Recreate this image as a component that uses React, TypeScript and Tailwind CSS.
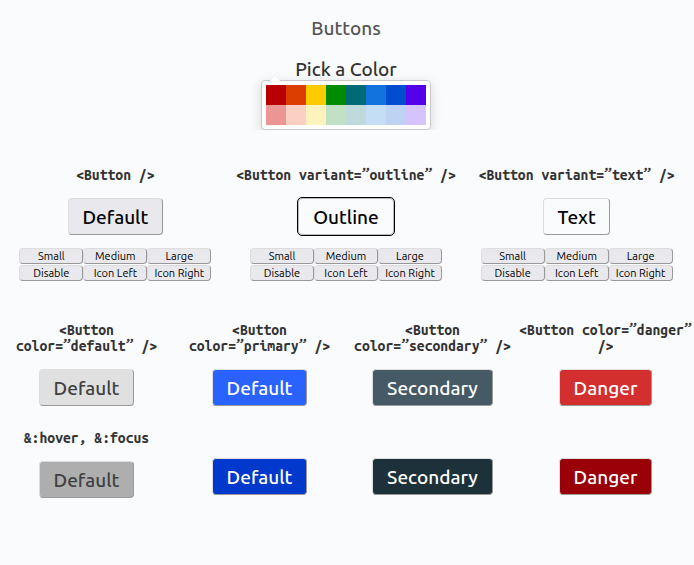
import clsx from "clsx";

const SANS = "font-[Ubuntu,'Noto_Sans',sans-serif]";
const MONO = "font-['Ubuntu_Mono','Liberation_Mono',monospace]";

const SWATCHES = [
  "bg-[#b80000]", "bg-[#db3e00]", "bg-[#fccb00]", "bg-[#008b02]",
  "bg-[#006b76]", "bg-[#1273de]", "bg-[#004dcf]", "bg-[#5300eb]",
  "bg-[#eb9694]", "bg-[#fad0c3]", "bg-[#fef3bd]", "bg-[#c1e1c5]",
  "bg-[#bedadc]", "bg-[#c4def6]", "bg-[#bed3f3]", "bg-[#d4c4fb]",
];

const SIZES = ["Small", "Medium", "Large", "Disable", "Icon Left", "Icon Right"];

const BEVEL = "border border-t-[#dddddd] border-l-[#dddddd] border-r-[#999999] border-b-[#999999]";

const VARIANTS = [
  { code: "<Button />", label: "Default", style: clsx(BEVEL, "w-[95px] bg-[#e9e9ed]") },
  { code: "<Button variant=”outline” />", label: "Outline", style: "w-24 border border-[#bbbbbb] outline outline-black" },
  { code: "<Button variant=”text” />", label: "Text", style: clsx(BEVEL, "w-[67px]") },
];

const COLORS = [
  { code: "<Button color=”default” />", label: "Default", size: "w-[95px]", base: "bg-[#e0e0e0] text-[#3f3f3f]", hover: "bg-[#aeaeae] text-[#3f3f3f]" },
  { code: "<Button color=”primary” />", label: "Default", size: "w-[95px]", base: "bg-[#2962ff] text-white", hover: "bg-[#0039cb] text-white" },
  { code: "<Button color=”secondary” />", label: "Secondary", size: "w-[121px]", base: "bg-[#455a64] text-white", hover: "bg-[#1c313a] text-white" },
  { code: "<Button color=”danger” />", label: "Danger", size: "w-[93px]", base: "bg-[#d32f2f] text-white", hover: "bg-[#9a0007] text-white" },
];

function Button({ label, style }: { label: string; style: string }) {
  return (
    <button type="button" className={clsx("flex h-[37px] items-center justify-center rounded text-[19px] leading-6 font-[550] whitespace-nowrap", style)}>
      {label}
    </button>
  );
}

function Code({ children }: { children: string }) {
  return <h3 className={clsx(MONO, "text-center text-[14px] leading-4 font-bold text-[#333333]")}>{children}</h3>;
}

function SizeButtons() {
  return (
    <div className="grid grid-cols-[repeat(3,64px)] gap-y-px">
      {SIZES.map((name) => (
        <button key={name} type="button" className={clsx(BEVEL, "h-4 rounded bg-[#e9e9ed] text-[11px] leading-3")}>
          {name}
        </button>
      ))}
    </div>
  );
}

function ColorPicker() {
  return (
    <div className="relative rounded border border-[#c9c9c9] bg-white p-1 shadow-[0_3px_12px_rgba(0,0,0,0.15)]">
      <span className="absolute bottom-full left-2 border-x-[5px] border-b-[5px] border-x-transparent border-b-white" />
      <div className="grid grid-cols-[repeat(8,20px)]">
        {SWATCHES.map((color) => (
          <button key={color} type="button" aria-label={color.slice(4, -1)} className={clsx("h-5", color)} />
        ))}
      </div>
    </div>
  );
}

export default function App() {
  return (
    <main className={clsx(SANS, "min-h-screen bg-[#fafbfd] pr-0.5 text-black")}>
      <header className="flex flex-col items-center overflow-hidden pt-4 text-[19px] font-[550]">
        <h1 className="leading-6 text-[#555555]">Buttons</h1>
        <h2 className="mt-[18px] leading-[22px] text-[#333333]">Pick a Color</h2>
        <ColorPicker />
      </header>

      <section className="grid grid-cols-3 pt-[37px]">
        {VARIANTS.map(({ code, label, style }) => (
          <div key={code} className="flex flex-col items-center">
            <Code>{code}</Code>
            <div className="pt-[15px] pb-[13px]">
              <Button label={label} style={style} />
            </div>
            <SizeButtons />
          </div>
        ))}
      </section>

      <section className="grid grid-cols-4 pt-[41px]">
        {COLORS.map(({ code, label, size, base, hover }, i) => (
          <div key={code} className="flex flex-col items-center">
            <Code>{code}</Code>
            <div className="pt-[15px]">
              <Button label={label} style={clsx(BEVEL, size, base)} />
            </div>
            <div className={clsx("flex flex-col items-center", i === 0 ? "gap-[15px] pt-6" : "pt-[52px]")}>
              {i === 0 && <Code>{"&:hover, &:focus"}</Code>}
              <Button label={label} style={clsx(BEVEL, size, hover)} />
            </div>
          </div>
        ))}
      </section>
    </main>
  );
}
